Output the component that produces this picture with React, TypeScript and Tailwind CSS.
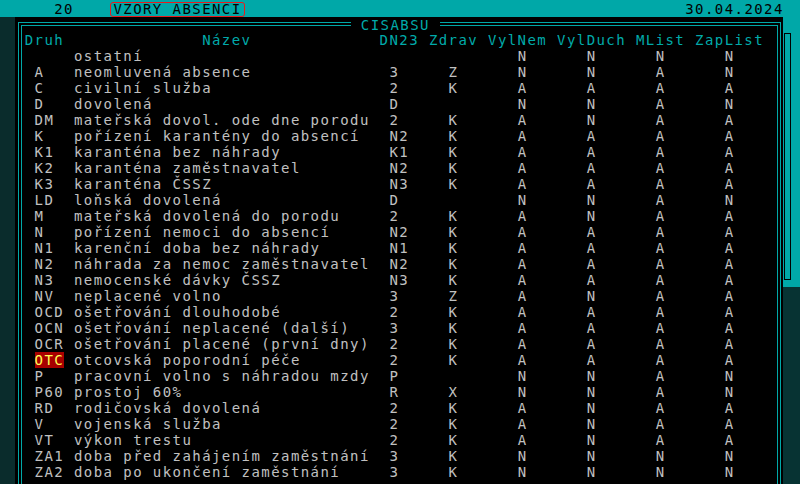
const rows: string[][] = [
  ["", "ostatní", "", "", "N", "N", "N", "N"],
  ["A", "neomluvená absence", "3", "Z", "N", "N", "A", "N"],
  ["C", "civilní služba", "2", "K", "A", "A", "A", "A"],
  ["D", "dovolená", "D", "", "N", "N", "A", "N"],
  ["DM", "mateřská dovol. ode dne porodu", "2", "K", "A", "N", "A", "A"],
  ["K", "pořízení karantény do absencí", "N2", "K", "A", "A", "A", "A"],
  ["K1", "karanténa bez náhrady", "K1", "K", "A", "A", "A", "A"],
  ["K2", "karanténa zaměstnavatel", "N2", "K", "A", "A", "A", "A"],
  ["K3", "karanténa ČSSZ", "N3", "K", "A", "A", "A", "A"],
  ["LD", "loňská dovolená", "D", "", "N", "N", "A", "N"],
  ["M", "mateřská dovolená do porodu", "2", "K", "A", "N", "A", "A"],
  ["N", "pořízení nemoci do absencí", "N2", "K", "A", "A", "A", "A"],
  ["N1", "karenční doba bez náhrady", "N1", "K", "A", "A", "A", "A"],
  ["N2", "náhrada za nemoc zaměstnavatel", "N2", "K", "A", "A", "A", "A"],
  ["N3", "nemocenské dávky ČSSZ", "N3", "K", "A", "A", "A", "A"],
  ["NV", "neplacené volno", "3", "Z", "A", "N", "A", "A"],
  ["OCD", "ošetřování dlouhodobé", "2", "K", "A", "A", "A", "A"],
  ["OCN", "ošetřování neplacené (další)", "3", "K", "A", "A", "A", "A"],
  ["OCR", "ošetřování placené (první dny)", "2", "K", "A", "A", "A", "A"],
  ["OTC", "otcovská poporodní péče", "2", "K", "A", "A", "A", "A"],
  ["P", "pracovní volno s náhradou mzdy", "P", "", "N", "N", "A", "N"],
  ["P60", "prostoj 60%", "R", "X", "N", "N", "A", "N"],
  ["RD", "rodičovská dovolená", "2", "K", "A", "N", "A", "A"],
  ["V", "vojenská služba", "2", "K", "A", "N", "A", "A"],
  ["VT", "výkon trestu", "2", "K", "A", "N", "A", "A"],
  ["ZA1", "doba před zahájením zaměstnání", "3", "K", "N", "N", "N", "N"],
  ["ZA2", "doba po ukončení zaměstnání", "3", "K", "N", "N", "N", "N"],
];

const header = "Druh              Název             DN23 Zdrav VylNem VylDuch MList ZapList";

function Row({ r, active }: { r: string[]; active: boolean }) {
  const [code, name, dn, zd, vn, vd, ml, zl] = r;
  const rest =
    " " + name.padEnd(32) + dn.padEnd(6) + zd.padEnd(7) + vn.padEnd(7) + vd.padEnd(7) + ml.padEnd(7) + zl;
  return (
    <div className="h-4 whitespace-pre text-[#c0c0c0]">
      {" "}
      <span className={active ? "bg-[#a80000] text-[#ffff55]" : ""}>{code.padEnd(3)}</span>
      {rest}
    </div>
  );
}

export default function App() {
  return (
    <div className="w-[800px] h-[484px] overflow-hidden flex flex-col bg-[#0a2c2c] font-['DejaVu_Sans_Mono',monospace] text-[14px] leading-4 tracking-[1.43px]">
      {/* horní lišta */}
      <div className="h-[17px] shrink-0 bg-[#00a8a8] text-black pl-[24.7px] pt-[1px] whitespace-pre">
        {"   20    "}
        <span className="inline-block -mx-[3px] px-[2px] h-[15px] leading-[13px] border-[1.5px] border-[#e81c1c] rounded-[3px]">
          VZORY ABSENCI
        </span>
        {" ".repeat(45)}30.04.2024
      </div>

      <div className="flex flex-1 min-h-0">
        <div className="w-[15px] shrink-0 bg-[#0a2c2c]" />

        {/* okno */}
        <div className="w-[768px] shrink-0 bg-black pt-[5px] pl-[3px]">
          <div className="relative w-[763px] h-[600px] border border-[#00a8a8] p-[2px]">
            <div className="h-full border border-[#00a8a8] pl-[2.7px] pt-[6px]">
              <div className="h-4 whitespace-pre text-[#00aaaa]">{header}</div>
              {rows.map((r) => (
                <Row key={r[0] + r[1]} r={r} active={r[0] === "OTC"} />
              ))}
            </div>
            <span className="absolute top-[-6px] left-[332px] h-4 bg-black text-[#00aaaa] whitespace-pre">
              {" CISABSU "}
            </span>
          </div>
        </div>

        {/* posuvník */}
        <div className="flex-1 flex flex-col bg-[#073333]">
          <div className="h-[270px] bg-[#00a8a8] pt-[16px] pl-[1px]">
            <div className="w-[7px] h-[247px] border border-black" />
          </div>
        </div>
      </div>
    </div>
  );
}
